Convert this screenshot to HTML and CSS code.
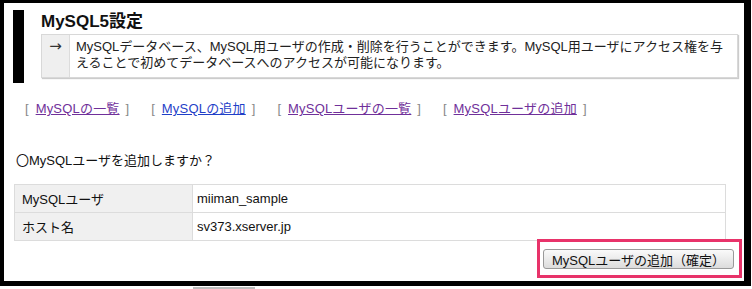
FILE: index.html
```html
<!DOCTYPE html>
<html lang="ja">
<head>
    <meta charset="UTF-8">
    <title>MySQL5設定</title>
    <link rel="stylesheet" href="styles.css">
</head>
<body>
    <div class="frame">
        <div class="header">
            <div class="header-bar"></div>
            <div class="header-body">
                <h1>MySQL5設定</h1>
                <div class="desc-box">
                    <div class="desc-arrow">→</div>
                    <div class="desc-text">MySQLデータベース、MySQL用ユーザの作成・削除を行うことができます。MySQL用ユーザにアクセス権を与えることで初めてデータベースへのアクセスが可能になります。</div>
                </div>
            </div>
        </div>

        <div class="menu">
            <span class="menu-item">[<a href="#" class="visited">MySQLの一覧</a>]</span>
            <span class="menu-item">[<a href="#">MySQLの追加</a>]</span>
            <span class="menu-item">[<a href="#" class="visited">MySQLユーザの一覧</a>]</span>
            <span class="menu-item">[<a href="#" class="visited">MySQLユーザの追加</a>]</span>
        </div>

        <p class="question">〇MySQLユーザを追加しますか？</p>

        <table class="info-table">
            <tr>
                <th>MySQLユーザ</th>
                <td>miiman_sample</td>
            </tr>
            <tr>
                <th>ホスト名</th>
                <td>sv373.xserver.jp</td>
            </tr>
        </table>

        <div class="button-row">
            <div class="button-wrap">
                <button type="button">MySQLユーザの追加（確定）</button>
                <div class="highlight"></div>
            </div>
        </div>
    </div>
    <div class="scroll-stub"></div>
</body>
</html>
```

FILE: styles.css
```css
body {
    margin: 0;
    background-color: #fff;
    font-family: 'Liberation Sans', 'Noto Sans CJK JP', sans-serif;
    font-size: 13px;
    color: #222;
}

.frame {
    width: 740px;
    height: 278px;
    border-style: solid;
    border-color: #000;
    border-width: 3px 7px 5px 4px;
}

.header {
    display: flex;
    margin: 7px 0 0 9px;
}

.header-bar {
    width: 11px;
    height: 73px;
    background-color: #000;
}

.header-body {
    margin-left: 17px;
    width: 697px;
}

h1 {
    margin: 0;
    font-size: 17px;
    line-height: 24px;
    font-weight: bold;
    color: #111;
}

.desc-box {
    display: flex;
    height: 42px;
    border: 1px solid #d8d8d8;
    box-shadow: 1px 1px 1px #ccc;
}

.desc-arrow {
    width: 27px;
    background-color: #efefef;
    border-right: 1px solid #dcdcdc;
    text-align: center;
    line-height: 20px;
    padding-top: 1px;
    font-family: 'DejaVu Sans', sans-serif;
    font-size: 15px;
    color: #333;
}

.desc-text {
    flex: 1;
    padding: 4px 8px 0 6px;
    line-height: 16px;
}

.menu {
    display: flex;
    gap: 22px;
    margin: 17px 0 0 21px;
    line-height: 18px;
    color: #888;
}

.menu-item a {
    margin: 0 6px 0 7px;
    color: #1f3fc8;
    text-decoration: underline;
    letter-spacing: 0.2px;
}

.menu-item a.visited {
    color: #70309a;
}

.question {
    margin: 34px 0 0 12px;
    line-height: 18px;
    color: #111;
}

.info-table {
    margin: 14px 0 0 10px;
    width: 712px;
    border-collapse: collapse;
    border: 1px solid #dcdcdc;
}

.info-table th,
.info-table td {
    height: 27px;
    padding: 0 0 0 7px;
    border: 1px solid #dcdcdc;
    text-align: left;
    font-weight: normal;
    color: #111;
}

.info-table th {
    width: 170px;
    background-color: #f0f0f0;
}

.info-table td {
    padding-left: 4px;
}

.button-row {
    display: flex;
    justify-content: flex-end;
    margin: 8px 10px 0 0;
}

.button-wrap {
    position: relative;
}

button {
    width: 191px;
    height: 20px;
    padding: 0;
    font-family: 'Liberation Sans', 'Noto Sans CJK JP', sans-serif;
    font-size: 13px;
    color: #111;
    background: linear-gradient(#fafafa, #dcdcdc);
    border: 1px solid #999;
    border-radius: 3px;
}

.highlight {
    position: absolute;
    top: -10px;
    left: -6px;
    right: -8px;
    bottom: -9px;
    border: 3px solid #e8336a;
}

.scroll-stub {
    margin: 1px 0 0 193px;
    width: 62px;
    height: 2px;
    background-color: #bbb;
}
```
